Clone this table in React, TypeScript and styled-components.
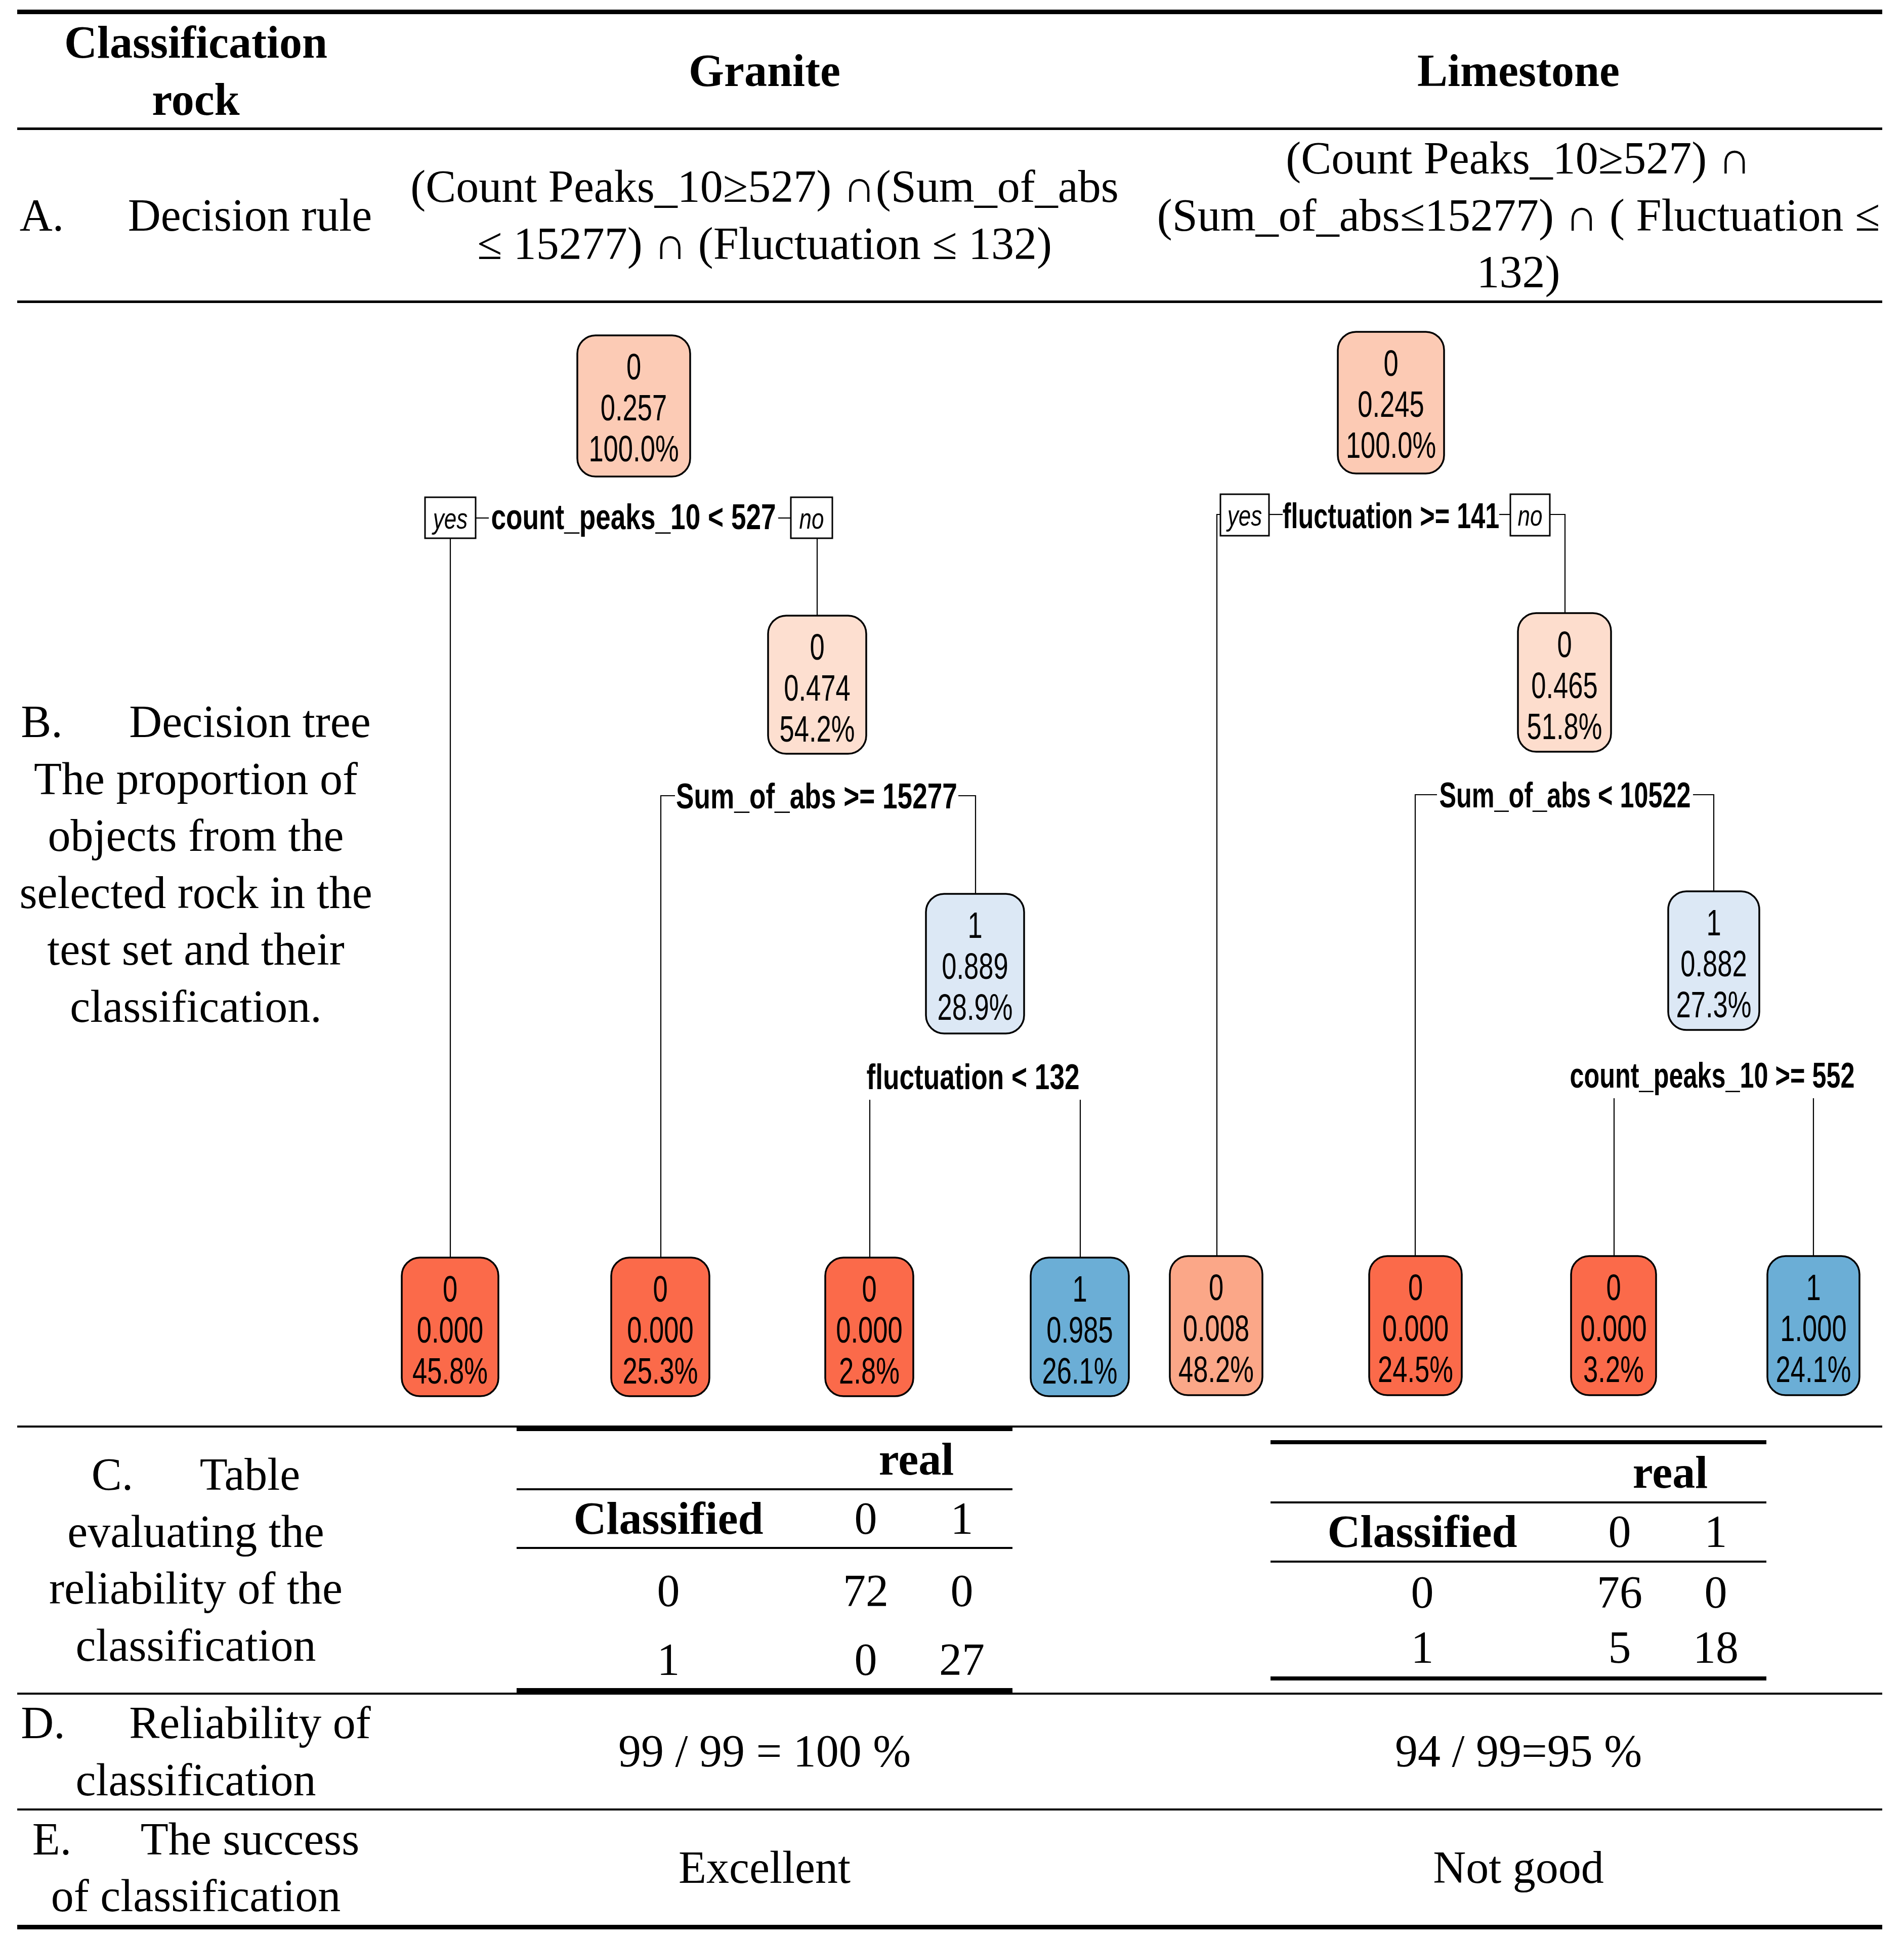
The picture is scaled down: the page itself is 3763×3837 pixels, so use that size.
import React from "react";
import styled, { createGlobalStyle } from "styled-components";

const Global = createGlobalStyle`
  html, body { margin: 0; padding: 0; background: #fff; }
  body { font-family: "Liberation Serif", "Times New Roman", serif; color: #000; }
`;

const Page = styled.div`
  width: 3763px;
  min-height: 3837px;
  padding: 19px 0 0 34px;
  box-sizing: border-box;
`;

const Table = styled.div`
  width: 3686px;
  border-top: 9px solid #000;
  font-size: 90px;
  line-height: 112.5px;
`;

const Row = styled.div<{ $h: number; $rule: number }>`
  display: grid;
  grid-template-columns: 706px 1542px 1438px;
  height: ${(p) => p.$h}px;
  border-bottom: ${(p) => p.$rule}px solid #000;
`;

const Cell = styled.div<{ $bold?: boolean }>`
  display: flex;
  align-items: center;
  justify-content: center;
  text-align: center;
  white-space: nowrap;
  font-weight: ${(p) => (p.$bold ? 700 : 400)};
`;

const Block = styled.div`
  text-align: center;
`;

const Num = styled.span`
  display: inline-block;
  width: 214px;
  text-align: left;
`;

/* ---------- decision tree drawing ---------- */

const TreeSvg = styled.svg`
  display: block;
`;

const TreeText = styled.text<{ $kind?: "node" | "split" | "yn" }>`
  font-family: "Liberation Sans", Arial, sans-serif;
  font-size: ${(p) => (p.$kind === "yn" ? 58 : p.$kind === "split" ? 70 : 72)}px;
  font-weight: ${(p) => (p.$kind === "split" ? 700 : 400)};
  font-style: ${(p) => (p.$kind === "yn" ? "italic" : "normal")};
  text-anchor: middle;
  fill: #000;
`;

const RED = "#FB6A4A";
const BLUE = "#6BAED6";
const LIGHTBLUE = "#DCE8F5";

type NodeDef = { x: number; y: number; w: number; h: number; fill: string; lines: string[] };
type BoxDef = { x: number; y: number; w: number; h: number; text: string };
type LabelDef = { cx: number; y: number; text: string };

type TreeDef = {
  vb: [number, number, number, number];
  labelScale: number;
  nodes: NodeDef[];
  boxes: BoxDef[];
  labels: LabelDef[];
  lines: string[];
};

const TreeNode: React.FC<{ n: NodeDef }> = ({ n }) => {
  const cx = n.x + n.w / 2;
  return (
    <g>
      <rect x={n.x} y={n.y} width={n.w} height={n.h} rx={36} ry={36} fill={n.fill} stroke="#000" strokeWidth={3.5} />
      {n.lines.map((t, i) => (
        <TreeText key={i} $kind="node" transform={`translate(${cx} ${n.y + 87 + i * 81}) scale(0.73 1)`}>
          {t}
        </TreeText>
      ))}
    </g>
  );
};

const Tree: React.FC<{ def: TreeDef }> = ({ def }) => {
  const [x, y, w, h] = def.vb;
  return (
    <TreeSvg width={w} height={h} viewBox={`${x} ${y} ${w} ${h}`}>
      {def.lines.map((pts, i) => (
        <polyline key={i} points={pts} fill="none" stroke="#000" strokeWidth={2.2} />
      ))}
      {def.boxes.map((b, i) => (
        <g key={i}>
          <rect x={b.x} y={b.y} width={b.w} height={b.h} fill="#fff" stroke="#000" strokeWidth={3} />
          <TreeText $kind="yn" transform={`translate(${b.x + b.w / 2} ${b.y + 62}) scale(0.76 1)`}>
            {b.text}
          </TreeText>
        </g>
      ))}
      {def.labels.map((l, i) => (
        <TreeText key={i} $kind="split" transform={`translate(${l.cx} ${l.y}) scale(${def.labelScale} 1)`}>
          {l.text}
        </TreeText>
      ))}
      {def.nodes.map((n, i) => (
        <TreeNode key={i} n={n} />
      ))}
    </TreeSvg>
  );
};

const graniteTree: TreeDef = {
  vb: [740, 599, 1542, 2219],
  labelScale: 0.76,
  nodes: [
    { x: 1141, y: 663, w: 223, h: 279, fill: "#FCCBB5", lines: ["0", "0.257", "100.0%"] },
    { x: 1518, y: 1217, w: 194, h: 273, fill: "#FDDFD0", lines: ["0", "0.474", "54.2%"] },
    { x: 1830, y: 1767, w: 194, h: 276, fill: LIGHTBLUE, lines: ["1", "0.889", "28.9%"] },
    { x: 794, y: 2486, w: 191, h: 274, fill: RED, lines: ["0", "0.000", "45.8%"] },
    { x: 1208, y: 2486, w: 194, h: 274, fill: RED, lines: ["0", "0.000", "25.3%"] },
    { x: 1631, y: 2486, w: 174, h: 274, fill: RED, lines: ["0", "0.000", "2.8%"] },
    { x: 2037, y: 2486, w: 194, h: 274, fill: BLUE, lines: ["1", "0.985", "26.1%"] },
  ],
  boxes: [
    { x: 840, y: 983, w: 100, h: 81, text: "yes" },
    { x: 1563, y: 983, w: 82, h: 81, text: "no" },
  ],
  labels: [
    { cx: 1252, y: 1046, text: "count_peaks_10 < 527" },
    { cx: 1614, y: 1598, text: "Sum_of_abs >= 15277" },
    { cx: 1923, y: 2153, text: "fluctuation < 132" },
  ],
  lines: [
    "940,1024 966,1024",
    "1538,1024 1563,1024",
    "890,1064 890,2486",
    "1615,1064 1615,1217",
    "1334,1573 1306,1573 1306,2486",
    "1894,1573 1928,1573 1928,1767",
    "1719,2174 1719,2486",
    "2135,2174 2135,2486",
  ],
};

const limestoneTree: TreeDef = {
  vb: [2282, 599, 1438, 2219],
  labelScale: 0.72,
  nodes: [
    { x: 2644, y: 656, w: 210, h: 280, fill: "#FCCAB4", lines: ["0", "0.245", "100.0%"] },
    { x: 3000, y: 1212, w: 184, h: 274, fill: "#FDDDCD", lines: ["0", "0.465", "51.8%"] },
    { x: 3297, y: 1762, w: 180, h: 274, fill: LIGHTBLUE, lines: ["1", "0.882", "27.3%"] },
    { x: 2312, y: 2483, w: 183, h: 275, fill: "#FBA788", lines: ["0", "0.008", "48.2%"] },
    { x: 2706, y: 2483, w: 183, h: 275, fill: RED, lines: ["0", "0.000", "24.5%"] },
    { x: 3105, y: 2483, w: 168, h: 275, fill: RED, lines: ["0", "0.000", "3.2%"] },
    { x: 3493, y: 2483, w: 182, h: 275, fill: BLUE, lines: ["1", "1.000", "24.1%"] },
  ],
  boxes: [
    { x: 2412, y: 977, w: 96, h: 82, text: "yes" },
    { x: 2985, y: 977, w: 78, h: 82, text: "no" },
  ],
  labels: [
    { cx: 2749, y: 1044, text: "fluctuation >= 141" },
    { cx: 3093, y: 1596, text: "Sum_of_abs < 10522" },
    { cx: 3384, y: 2150, text: "count_peaks_10 >= 552" },
  ],
  lines: [
    "2412,1017 2405,1017 2405,2483",
    "2508,1017 2535,1017",
    "2963,1017 2985,1017",
    "3063,1017 3093,1017 3093,1212",
    "2840,1571 2797,1571 2797,2483",
    "3346,1571 3387,1571 3387,1762",
    "3190,2171 3190,2483",
    "3584,2171 3584,2483",
  ],
};

/* ---------- confusion tables ---------- */

const ConfWrap = styled.div<{ $top: number; $bottom: number; $pb: number }>`
  width: 980px;
  border-top: ${(p) => p.$top}px solid #000;
  border-bottom: ${(p) => p.$bottom}px solid #000;
  padding-bottom: ${(p) => p.$pb}px;
`;

const ConfRow = styled.div<{ $h: number; $rule?: boolean; $mt?: number }>`
  display: grid;
  grid-template-columns: 600px 180px 200px;
  height: ${(p) => p.$h}px;
  margin-top: ${(p) => p.$mt ?? 0}px;
  align-items: center;
  text-align: center;
  border-bottom: ${(p) => (p.$rule ? "4px solid #000" : "none")};
`;

const ConfCell = styled.div<{ $bold?: boolean; $span?: boolean }>`
  font-weight: ${(p) => (p.$bold ? 700 : 400)};
  grid-column: ${(p) => (p.$span ? "2 / span 2" : "auto")};
`;

type ConfDef = {
  top: number;
  bottom: number;
  pb: number;
  headH: number;
  bodyH: number;
  mt: [number, number];
  rows: [string, string, string][];
};

const ConfTable: React.FC<{ def: ConfDef }> = ({ def }) => (
  <ConfWrap $top={def.top} $bottom={def.bottom} $pb={def.pb}>
    <ConfRow $h={113} $rule>
      <ConfCell />
      <ConfCell $bold $span>
        real
      </ConfCell>
    </ConfRow>
    <ConfRow $h={def.headH} $rule>
      <ConfCell $bold>Classified</ConfCell>
      <ConfCell>0</ConfCell>
      <ConfCell>1</ConfCell>
    </ConfRow>
    {def.rows.map((r, i) => (
      <ConfRow key={i} $h={def.bodyH} $mt={def.mt[i]}>
        <ConfCell>{r[0]}</ConfCell>
        <ConfCell>{r[1]}</ConfCell>
        <ConfCell>{r[2]}</ConfCell>
      </ConfRow>
    ))}
  </ConfWrap>
);

const graniteConf: ConfDef = {
  top: 7,
  bottom: 9,
  pb: 0,
  headH: 112,
  bodyH: 112,
  mt: [27, 24],
  rows: [
    ["0", "72", "0"],
    ["1", "0", "27"],
  ],
};

const limestoneConf: ConfDef = {
  top: 8,
  bottom: 8,
  pb: 4,
  headH: 113,
  bodyH: 109,
  mt: [3, 0],
  rows: [
    ["0", "76", "0"],
    ["1", "5", "18"],
  ],
};

export default function App() {
  return (
    <Page>
      <Global />
      <Table>
        <Row $h={224} $rule={5}>
          <Cell $bold>
            <Block>
              Classification
              <br />
              rock
            </Block>
          </Cell>
          <Cell $bold>Granite</Cell>
          <Cell $bold>Limestone</Cell>
        </Row>

        <Row $h={337} $rule={5}>
          <Cell>
            <Block>
              <Num>A.</Num>Decision rule
            </Block>
          </Cell>
          <Cell>
            <Block>
              (Count Peaks_10≥527) ∩(Sum_of_abs
              <br />≤ 15277) ∩ (Fluctuation ≤ 132)
            </Block>
          </Cell>
          <Cell>
            <Block>
              (Count Peaks_10≥527) ∩
              <br />
              (Sum_of_abs≤15277) ∩ ( Fluctuation ≤
              <br />
              132)
            </Block>
          </Cell>
        </Row>

        <Row $h={2219} $rule={4}>
          <Cell>
            <Block>
              <Num>B.</Num>Decision tree
              <br />
              The proportion of
              <br />
              objects from the
              <br />
              selected rock in the
              <br />
              test set and their
              <br />
              classification.
            </Block>
          </Cell>
          <Tree def={graniteTree} />
          <Tree def={limestoneTree} />
        </Row>

        <Row $h={524} $rule={4}>
          <Cell>
            <Block>
              <Num>C.</Num>Table
              <br />
              evaluating the
              <br />
              reliability of the
              <br />
              classification
            </Block>
          </Cell>
          <Cell>
            <ConfTable def={graniteConf} />
          </Cell>
          <Cell>
            <ConfTable def={limestoneConf} />
          </Cell>
        </Row>

        <Row $h={225} $rule={4}>
          <Cell>
            <Block>
              <Num>D.</Num>Reliability of
              <br />
              classification
            </Block>
          </Cell>
          <Cell>99 / 99 = 100 %</Cell>
          <Cell>94 / 99=95 %</Cell>
        </Row>

        <Row $h={226} $rule={9}>
          <Cell>
            <Block>
              <Num>E.</Num>The success
              <br />
              of classification
            </Block>
          </Cell>
          <Cell>Excellent</Cell>
          <Cell>Not good</Cell>
        </Row>
      </Table>
    </Page>
  );
}
